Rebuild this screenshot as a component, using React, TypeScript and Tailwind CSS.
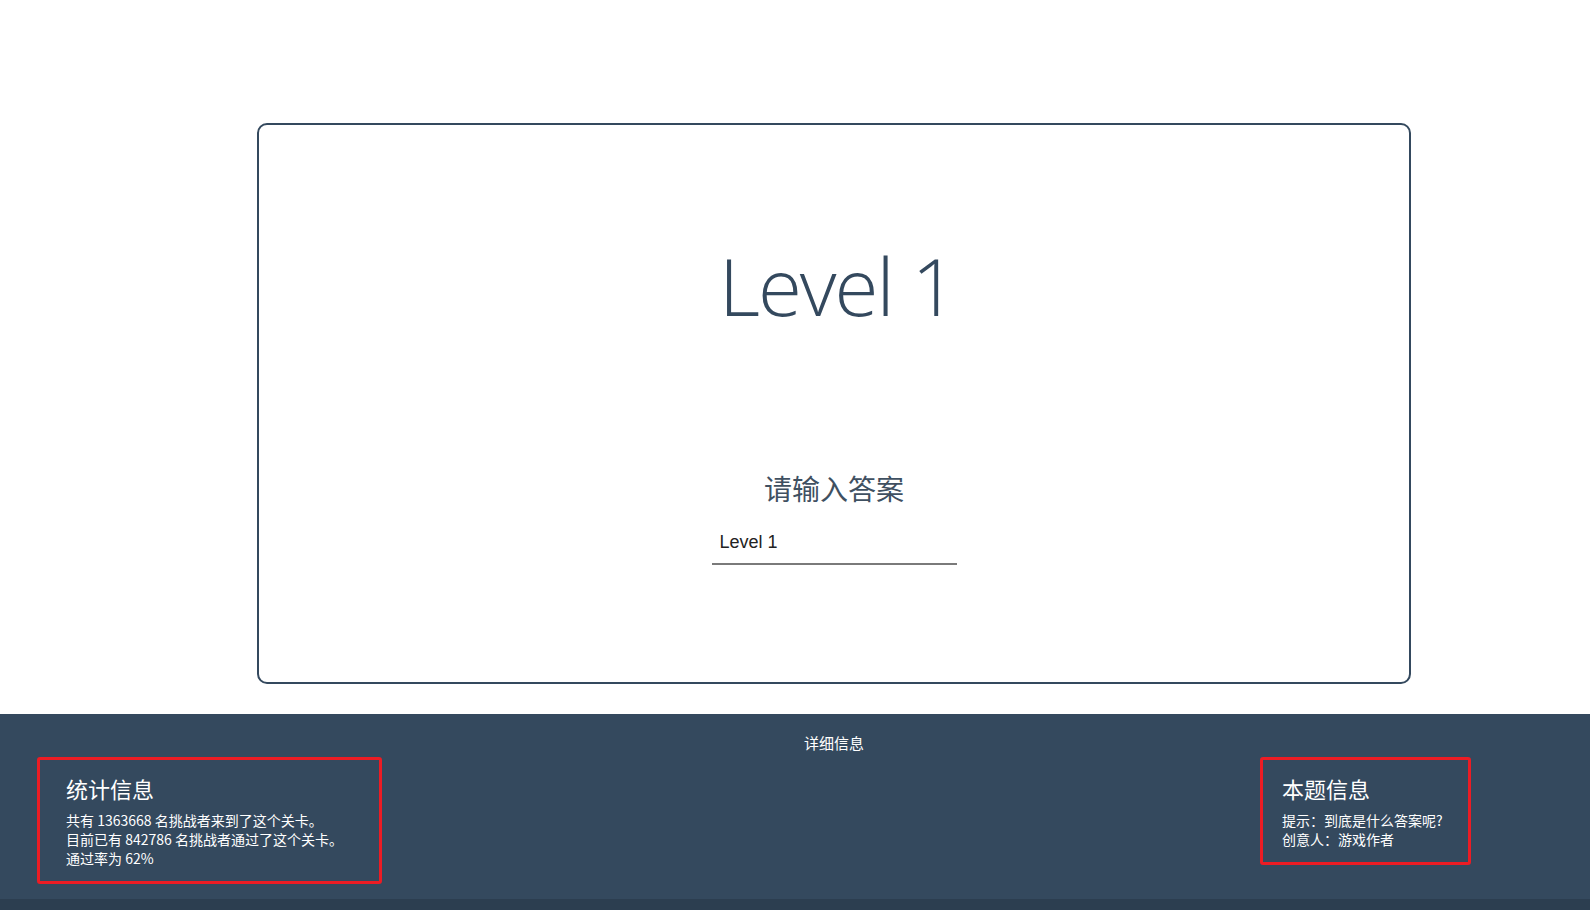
import { useState } from 'react'

const STATS = [
  '共有 1363668 名挑战者来到了这个关卡。',
  '目前已有 842786 名挑战者通过了这个关卡。',
  '通过率为 62%',
]

const INFO = ['提示：到底是什么答案呢?', '创意人：游戏作者']

function InfoBox({ title, lines, className }: { title: string; lines: string[]; className: string }) {
  return (
    <div className={`${className} border-[3px] border-[#ec1c24] rounded-[3px] pr-4 pt-[13px] pb-[13px] text-white`}>
      <h3 className="text-[22px] leading-[30px]">{title}</h3>
      <div className="mt-[8px] text-[14px] leading-[19px]">
        {lines.map(l => (
          <p key={l}>{l}</p>
        ))}
      </div>
    </div>
  )
}

export default function App() {
  const [answer, setAnswer] = useState('Level 1')

  return (
    <div className="min-h-screen bg-white font-['Open_Sans','Noto_Sans_CJK_SC',sans-serif]">
      <div className="pt-[123px] pb-[30px]">
        <div className="ml-[257px] w-[1154px] h-[561px] border-2 border-[#34495e] rounded-[10px] flex flex-col items-center">
          <h1 className="mt-[120px] pl-[6px] text-[80px] leading-none font-light text-[#34495e] tracking-tight">
            Level 1
          </h1>
          <div className="mt-[145px] text-[28px] leading-[36px] text-[#3f5061] font-['Noto_Sans_CJK_SC',sans-serif]">
            请输入答案
          </div>
          <input
            value={answer}
            onChange={e => setAnswer(e.target.value)}
            className="mt-[17px] w-[245px] h-[42px] px-2 pb-[2px] border-b-2 border-[#7a7a7a] text-[18px] text-[#222] font-['Liberation_Sans',sans-serif] outline-none bg-transparent"
          />
        </div>
      </div>

      <footer className="bg-[#34495e] h-[185px] pt-[19px] font-['Noto_Sans_CJK_SC',sans-serif]">
        <div className="ml-[257px] w-[1154px] text-center text-[15px] leading-[20px] text-white">详细信息</div>
        <div className="mt-[4px] pl-[37px] pr-[119px] flex justify-between items-start">
          <InfoBox title="统计信息" lines={STATS} className="w-[345px] pl-[26px]" />
          <InfoBox title="本题信息" lines={INFO} className="w-[211px] pl-[19px]" />
        </div>
      </footer>
      <div className="h-[11px] bg-[#2c3e50]" />
    </div>
  )
}
